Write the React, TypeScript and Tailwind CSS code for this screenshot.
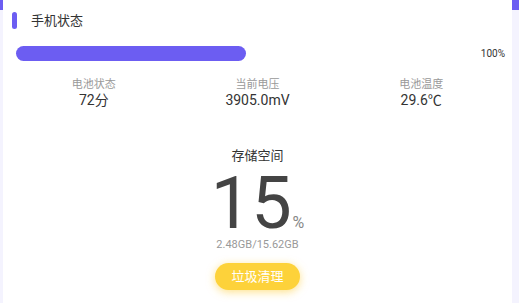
import React from "react";

export default function App() {
  return (
    <div className="h-[303px] w-[519px] overflow-hidden bg-[#f4f3fe] font-['Roboto','Noto_Sans_CJK_SC',sans-serif]">
      <div className="h-[10px] w-full bg-[#6c5df2]" />
      <div className="-mt-[10px] ml-[3px] mr-[7px] h-[320px] bg-white">
        {/* title */}
        <div className="flex items-center pl-[9px] pt-[12px]">
          <div className="h-[17px] w-[5px] rounded-[3px] bg-[#6c5df2]" />
          <div className="ml-[14px] text-[13px] leading-[17px] text-[#333]">手机状态</div>
        </div>
        {/* progress */}
        <div className="mt-[17px] flex items-center justify-between pl-[13px] pr-[7px]">
          <div className="h-[15px] w-[230px] rounded-full bg-[#6c5df2]" />
          <div className="text-[10px] leading-[15px] text-[#333]">100%</div>
        </div>
        {/* stats */}
        <div className="mt-[16px] grid grid-cols-3 px-[9px]">
          {[
            ["电池状态", "72分"],
            ["当前电压", "3905.0mV"],
            ["电池温度", "29.6℃"],
          ].map(([l, v]) => (
            <div key={l} className="flex flex-col items-center">
              <div className="text-[11px] leading-[15px] text-[#999]">{l}</div>
              <div className="text-[14px] leading-[16px] text-[#333]">{v}</div>
            </div>
          ))}
        </div>
        {/* storage */}
        <div className="mt-[39px] flex flex-col items-center">
          <div className="text-[13px] leading-[18px] text-[#333]">存储空间</div>
          <div className="mt-[6px] flex items-baseline">
            <span className="text-[72px] font-normal leading-[66px] text-[#444]">15</span>
            <span className="ml-[1px] text-[16px] leading-[16px] text-[#888]">%</span>
          </div>
          <div className="mt-[2px] text-[11px] leading-[12px] text-[#999]">2.48GB/15.62GB</div>
          <button className="mt-[12px] flex h-[27px] w-[85px] items-center justify-center rounded-full bg-[#fdd23a] text-[13px] text-white shadow-[0_2px_8px_rgba(253,200,40,0.55)]">
            垃圾清理
          </button>
        </div>
      </div>
    </div>
  );
}
